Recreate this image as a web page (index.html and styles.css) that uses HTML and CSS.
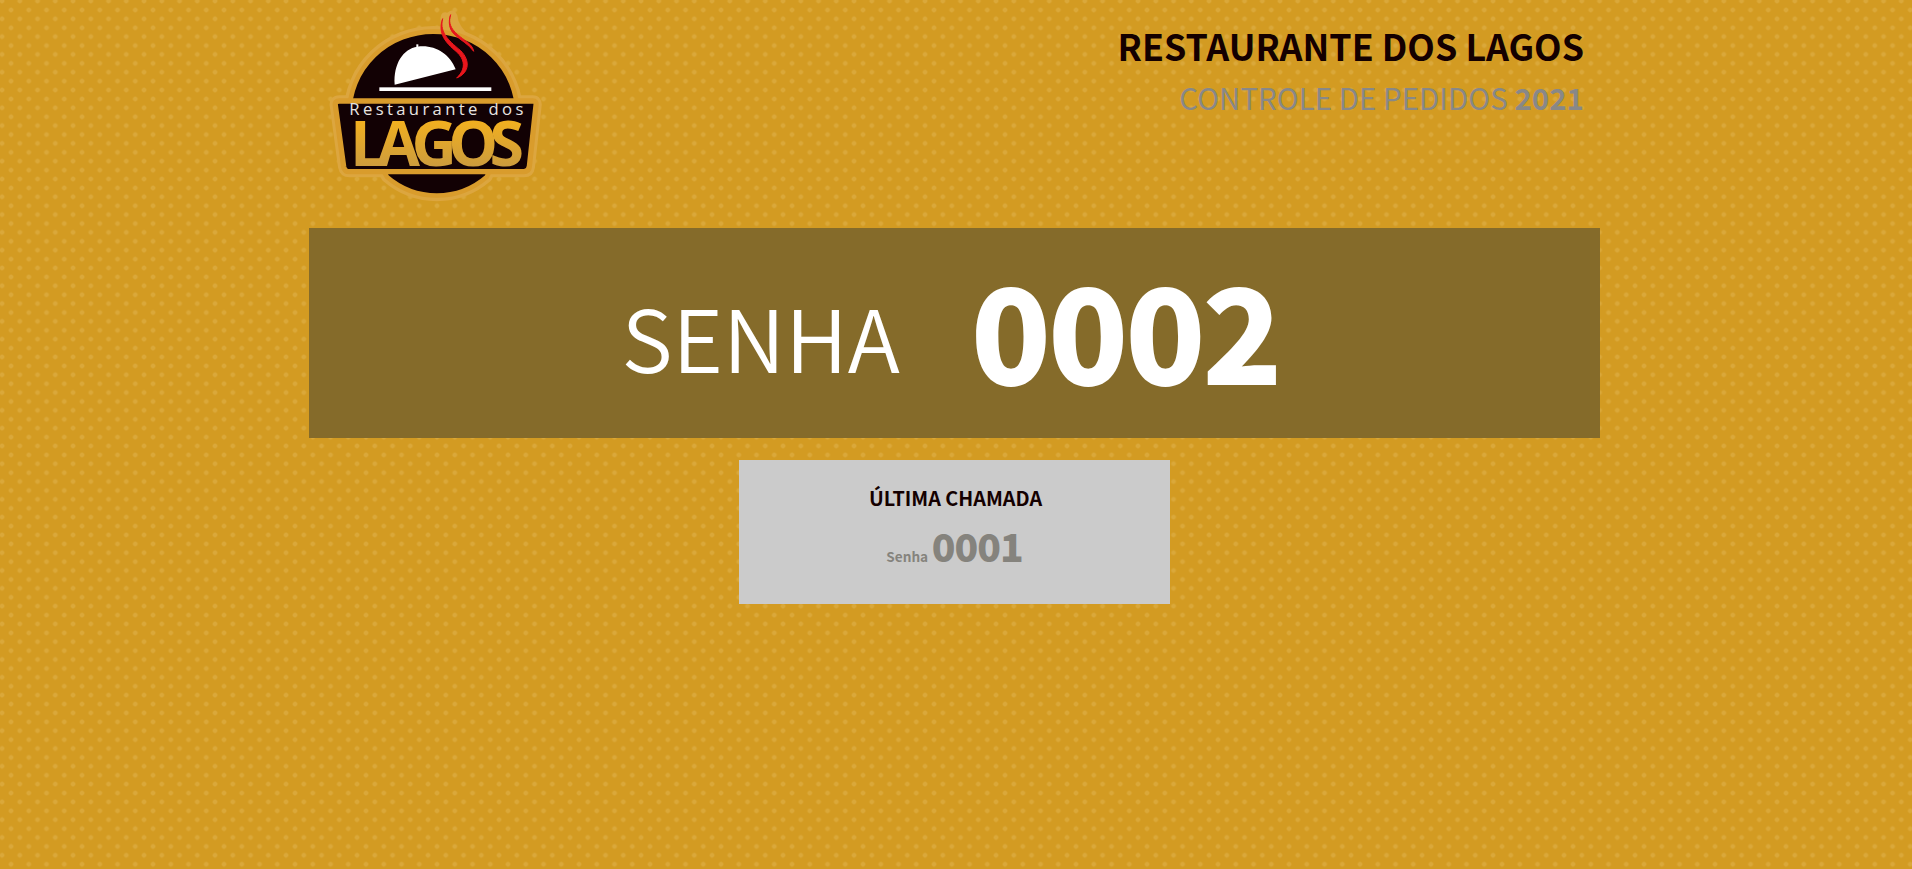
FILE: index.html
```html
<!DOCTYPE html>
<html lang="pt-BR">
<head>
  <meta charset="UTF-8" />
  <title>Controle de Pedidos</title>
  <link rel="stylesheet" href="styles.css">
</head>
<body>
  <div class="container">
    <header class="header">
      <svg class="logo" viewBox="0 0 750 660" aria-label="Restaurante dos Lagos">
        <defs>
          <linearGradient id="lagosFill" x1="0" y1="0" x2="0" y2="1">
            <stop offset="0.2" stop-color="#f6b21c" />
            <stop offset="0.85" stop-color="#c99a40" />
          </linearGradient>
          <path id="badge" d="M118 340 A252 245 0 0 1 622 340 L530 531 A229 229 0 0 1 231 531 Z" />
          <path id="plate" d="M88 303 H668 Q680 303 678 316 L658 500 Q656 515 642 515 H118 Q104 515 101 500 L76 316 Q74 303 88 303 Z" />
        </defs>
        <!-- halo -->
        <use href="#badge" class="halo" />
        <use href="#plate" class="halo" />
        <path class="halo-fill" d="M392 66 Q388 32 412 38 Q432 22 442 46 Q444 78 482 110 L500 170 L400 120 Z" />
        <!-- black badge -->
        <use href="#badge" class="badge" />
        <use href="#plate" class="plate" />
        <!-- cloche -->
        <path d="M254 254 C250 190 280 146 322 140 C370 132 420 160 437 208 Z" fill="#fff" />
        <rect x="319" y="133" width="6" height="9" fill="#fff" />
        <rect x="208" y="262" width="336" height="11" fill="#fff" />
        <!-- steam -->
        <path class="steam" d="M398 56 C386 100 424 128 452 152 C480 180 480 218 440 234 C468 208 466 178 438 154 C408 128 382 102 398 56 Z" />
        <path class="steam" d="M422 44 C408 85 446 106 474 128 C484 136 490 146 491 154 C476 132 450 120 432 102 C418 88 414 66 422 44 Z" />
        <!-- wordmark -->
        <text class="logo-small" x="118" y="345" textLength="522">Restaurante dos</text>
        <text class="logo-big" x="120" y="497" textLength="522" lengthAdjust="spacing">LAGOS</text>
      </svg>
      <div class="titles">
        <h1 class="title">RESTAURANTE DOS LAGOS</h1>
        <h2 class="subtitle">CONTROLE DE PEDIDOS <strong>2021</strong></h2>
      </div>
    </header>

    <section class="current">
      <span class="current-label">SENHA</span>
      <span class="current-number">0002</span>
    </section>

    <section class="last">
      <h3 class="last-title">ÚLTIMA CHAMADA</h3>
      <p class="last-line"><small>Senha</small> <strong>0001</strong></p>
    </section>
  </div>
</body>
</html>
```

FILE: styles.css
```css
* {
  box-sizing: border-box;
}

html, body {
  height: 100%;
}

body {
  margin: 0;
  font-family: "Noto Sans CJK SC", "Noto Sans", sans-serif;
  background-color: #d39b22;
  background-image:
    radial-gradient(circle, #daa83a 0, #daa83a 1.6px, transparent 3px),
    radial-gradient(circle, #daa83a 0, #daa83a 1.6px, transparent 3px);
  background-size: 17.75px 17.8px;
  background-position: -6.85px -7.9px, 2.15px 1.1px;
  overflow: hidden;
}

.container {
  width: 1291px;
  margin-left: 309px;
}

.header {
  display: flex;
  justify-content: space-between;
  height: 228px;
}

.logo {
  width: 250px;
  height: 220px;
  margin-left: 1px;
}

.halo {
  fill: #dca63f;
  stroke: #dca63f;
  stroke-width: 34px;
  stroke-linejoin: round;
}

.halo-fill {
  fill: #dca63f;
}

.badge {
  fill: #120104;
  stroke: #d99c2c;
  stroke-width: 14px;
}

.plate {
  fill: #120104;
  stroke: #d99c2c;
  stroke-width: 16px;
  stroke-linejoin: round;
}

.steam {
  fill: #e8161c;
  stroke: #e8161c;
  stroke-width: 3px;
}

.logo-small {
  font-family: "Open Sans", sans-serif;
  font-size: 50px;
  fill: #e8e4e0;
}

.logo-big {
  font-family: "Open Sans", sans-serif;
  font-weight: 700;
  font-size: 188px;
  fill: url(#lagosFill);
}

.titles {
  padding: 20px 16px 0 0;
  text-align: right;
}

.title {
  margin: 0;
  font-size: 35.8px;
  line-height: 50px;
  font-weight: 700;
  color: #140000;
}

.subtitle {
  margin: 3px 0 0;
  font-size: 29.5px;
  line-height: 48px;
  font-weight: 400;
  color: #888;
}

.subtitle strong {
  font-weight: 700;
}

.current {
  display: flex;
  justify-content: center;
  align-items: center;
  gap: 71px;
  height: 210px;
  padding: 0 8px 11px 0;
  background: #856b2a;
  color: #fff;
  line-height: 1;
}

.current-label {
  padding-top: 18px;
  font-size: 86.5px;
  font-weight: 350;
}

.current-number {
  font-size: 132px;
  font-weight: 900;
  letter-spacing: -3.2px;
}

.last {
  width: 431px;
  height: 144px;
  margin: 22px auto 0;
  padding-top: 24px;
  background: #cbcbcb;
  text-align: center;
}

.last-title {
  margin: 0;
  padding-left: 2px;
  font-size: 19.8px;
  line-height: 28px;
  font-weight: 700;
  color: #140000;
}

.last-line {
  margin: 9px 0 0;
  color: #85837d;
  line-height: 48px;
}

.last-line small {
  font-size: 13.6px;
  font-weight: 700;
}

.last-line strong {
  font-size: 39px;
  font-weight: 900;
  letter-spacing: -1px;
}
```
